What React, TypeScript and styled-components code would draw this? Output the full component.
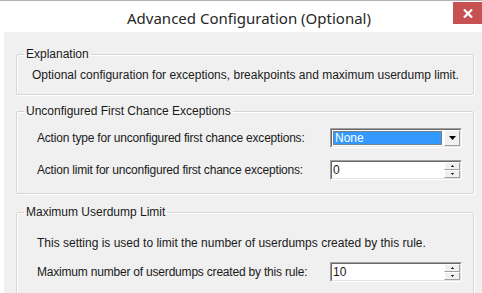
import React from "react";
import styled, { createGlobalStyle } from "styled-components";

const GlobalStyle = createGlobalStyle`
  html, body {
    margin: 0;
    padding: 0;
    background: #ffffff;
  }
  body {
    font-family: "Liberation Sans", Arial, sans-serif;
    color: #1a1a1a;
  }
`;

const Window = styled.div`
  width: 482px;
  height: 293px;
  box-sizing: border-box;
  border-top: 1px solid #b4b4b4;
  background: #ffffff;
  overflow: hidden;
  display: flex;
  flex-direction: column;
`;

const TitleBar = styled.div`
  position: relative;
  height: 31px;
  flex-shrink: 0;
  display: flex;
  align-items: center;
  justify-content: center;
  padding-left: 16px;
`;

const Title = styled.span`
  font-family: "Noto Sans", "Open Sans", sans-serif;
  font-size: 15px;
  color: #262626;
  margin-top: 2px;
`;

const CloseButton = styled.button`
  position: absolute;
  top: 1px;
  right: 0;
  width: 29px;
  height: 22px;
  border: none;
  padding: 0;
  background: #c75050;
  display: flex;
  align-items: center;
  justify-content: center;
`;

const Body = styled.div`
  flex: 1;
  margin-left: 4px;
  background: #f0f0f0;
  padding: 15px 8px 0 12px;
  display: flex;
  flex-direction: column;
`;

const GroupBox = styled.fieldset<{ $height: number; $top: number }>`
  margin: ${(p) => p.$top}px 0 0 0;
  padding: 4px 0 0 0;
  border: 1px solid #d5d5d5;
  box-shadow: inset 1px 1px 0 #ffffff, 1px 1px 0 #ffffff;
  border-radius: 2px;
  height: ${(p) => p.$height}px;
  flex-shrink: 0;
  box-sizing: border-box;
`;

const Legend = styled.legend`
  margin-left: 7px;
  padding: 0 2px 0 2px;
  font-size: 12px;
  line-height: 14px;
  color: #1a1a1a;
`;

const Text = styled.p<{ $indent: number; $top: number }>`
  margin: 0;
  padding: ${(p) => p.$top}px 0 0 ${(p) => p.$indent}px;
  font-size: 12px;
  line-height: 16px;
  color: #1a1a1a;
`;

const Rows = styled.div<{ $top: number; $gap: number }>`
  display: flex;
  flex-direction: column;
  gap: ${(p) => p.$gap}px;
  padding: ${(p) => p.$top}px 0 0 20px;
`;

const Row = styled.div`
  display: grid;
  grid-template-columns: 293px 132px;
  align-items: center;
  font-size: 12px;
`;

const Label = styled.span`
  letter-spacing: -0.2px;
`;

const SunkenBox = styled.div`
  height: 20px;
  box-sizing: border-box;
  border-top: 1px solid #a0a0a0;
  border-left: 1px solid #a0a0a0;
  border-right: 1px solid #ffffff;
  border-bottom: 1px solid #ffffff;
  display: flex;
`;

const SunkenInner = styled.div`
  flex: 1;
  display: flex;
  align-items: stretch;
  border-top: 1px solid #696969;
  border-left: 1px solid #696969;
  border-right: 1px solid #e3e3e3;
  border-bottom: 1px solid #e3e3e3;
  background: #ffffff;
`;

const Selected = styled.div`
  flex: 1;
  margin: 1px 2px 1px 1px;
  background: #3399ff;
  outline: 1px dotted #b06a1a;
  outline-offset: -1px;
  color: #ffffff;
  font-size: 12px;
  line-height: 14px;
  padding-left: 2px;
`;

const Value = styled.div`
  flex: 1;
  font-size: 12px;
  line-height: 16px;
  padding-left: 1px;
  color: #1a1a1a;
`;

const DropButton = styled.div`
  width: 16px;
  box-sizing: border-box;
  background: #f0f0f0;
  border-top: 1px solid #ffffff;
  border-left: 1px solid #ffffff;
  border-right: 1px solid #a0a0a0;
  border-bottom: 1px solid #a0a0a0;
  display: flex;
  align-items: center;
  justify-content: center;
`;

const Spinner = styled.div`
  width: 16px;
  display: flex;
  flex-direction: column;
`;

const SpinHalf = styled.div`
  flex: 1;
  box-sizing: border-box;
  background: #f0f0f0;
  border-top: 1px solid #ffffff;
  border-left: 1px solid #ffffff;
  border-right: 1px solid #a0a0a0;
  border-bottom: 1px solid #a0a0a0;
  display: flex;
  align-items: center;
  justify-content: center;
`;

const Arrow = ({ up, size }: { up?: boolean; size: number }) => (
  <svg width={size * 2 - 1} height={size} viewBox={`0 0 ${size * 2 - 1} ${size}`}>
    <polygon
      points={
        up
          ? `${size - 0.5},0 ${size * 2 - 1},${size} 0,${size}`
          : `0,0 ${size * 2 - 1},0 ${size - 0.5},${size}`
      }
      fill="#000"
    />
  </svg>
);

const ComboBox = ({ value }: { value: string }) => (
  <SunkenBox>
    <SunkenInner>
      <Selected>{value}</Selected>
      <DropButton>
        <Arrow size={4} />
      </DropButton>
    </SunkenInner>
  </SunkenBox>
);

const NumericUpDown = ({ value }: { value: string }) => (
  <SunkenBox>
    <SunkenInner>
      <Value>{value}</Value>
      <Spinner>
        <SpinHalf>
          <Arrow up size={2} />
        </SpinHalf>
        <SpinHalf>
          <Arrow size={2} />
        </SpinHalf>
      </Spinner>
    </SunkenInner>
  </SunkenBox>
);

export default function App() {
  return (
    <>
      <GlobalStyle />
      <Window>
        <TitleBar>
          <Title>Advanced Configuration (Optional)</Title>
          <CloseButton aria-label="Close">
            <svg width="10" height="9" viewBox="0 0 10 9">
              <path d="M1 0.5 L9 8.5 M9 0.5 L1 8.5" stroke="#ffffff" strokeWidth="2.2" />
            </svg>
          </CloseButton>
        </TitleBar>
        <Body>
          <GroupBox $height={48} $top={0}>
            <Legend>Explanation</Legend>
            <Text $indent={15} $top={2}>
              Optional configuration for exceptions, breakpoints and maximum userdump limit.
            </Text>
          </GroupBox>
          <GroupBox $height={90} $top={9}>
            <Legend>Unconfigured First Chance Exceptions</Legend>
            <Rows $top={6} $gap={12}>
              <Row>
                <Label>Action type for unconfigured first chance exceptions:</Label>
                <ComboBox value="None" />
              </Row>
              <Row>
                <Label>Action limit for unconfigured first chance exceptions:</Label>
                <NumericUpDown value="0" />
              </Row>
            </Rows>
          </GroupBox>
          <GroupBox $height={120} $top={11}>
            <Legend>Maximum Userdump Limit</Legend>
            <Rows $top={12} $gap={11}>
              <Text $indent={0} $top={0}>
                This setting is used to limit the number of userdumps created by this rule.
              </Text>
              <Row>
                <Label>Maximum number of userdumps created by this rule:</Label>
                <NumericUpDown value="10" />
              </Row>
            </Rows>
          </GroupBox>
        </Body>
      </Window>
    </>
  );
}
